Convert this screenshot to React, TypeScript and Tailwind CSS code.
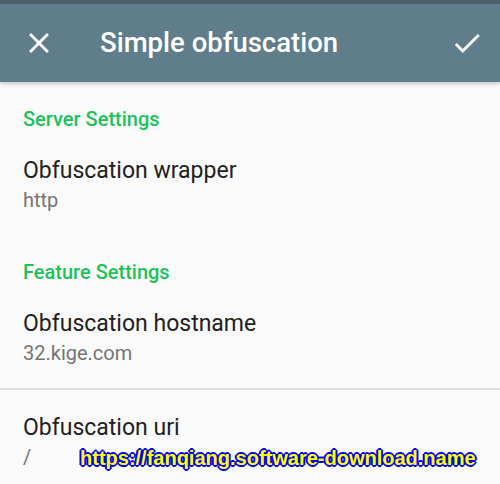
import React from "react";

const Row = ({ title, value, top = 16 }: { title: string; value: string; top?: number }) => (
  <div className={top === 16 ? "px-[23px] pt-[16px] pb-[21px]" : "px-[23px] pt-[22px] pb-[21px]"}>
    <div className="text-[23px] leading-[31px] text-[#212121]">{title}</div>
    <div className="text-[20px] leading-[28px] text-[#757575]">{value}</div>
  </div>
);

const Header = ({ children }: { children: React.ReactNode }) => (
  <div className="px-[23px] pt-[25px] pb-[8px] text-[20px] leading-[24px] font-medium text-[#1cc35a]">
    {children}
  </div>
);

const App = () => {
  return (
    <div className="w-[500px] h-[484px] overflow-hidden bg-[#fafafa] font-['Roboto',sans-serif] relative">
      <div className="h-[4px] bg-[#4b626d]" />
      <div className="h-[78px] bg-[#607d8b] flex items-center shadow-[0_2px_4px_rgba(0,0,0,0.2)] relative z-10">
        <svg width="34" height="34" viewBox="0 0 24 24" className="ml-[22px] shrink-0">
          <path d="M19 6.41L17.59 5 12 10.59 6.41 5 5 6.41 10.59 12 5 17.59 6.41 19 12 13.41 17.59 19 19 17.59 13.41 12z" fill="#fff" />
        </svg>
        <div className="ml-[44px] text-[27.5px] font-medium text-white">Simple obfuscation</div>
        <svg width="34" height="34" viewBox="0 0 24 24" className="ml-auto mr-[16px] shrink-0">
          <path d="M9 16.17L4.83 12l-1.42 1.41L9 19 21 7l-1.41-1.41z" fill="#fff" />
        </svg>
      </div>
      <Header>Server Settings</Header>
      <Row title="Obfuscation wrapper" value="http" />
      <Header>Feature Settings</Header>
      <Row title="Obfuscation hostname" value="32.kige.com" />
      <div className="h-[2px] bg-[#dedede]" />
      <Row title="Obfuscation uri" value="/" top={22} />
      <div className="absolute left-[80px] top-[443px] text-[20px] font-bold text-[#ffff00] font-['Liberation_Sans',sans-serif] [text-shadow:1px_1px_0_#0000ff,-1px_-1px_0_#0000ff,1px_-1px_0_#0000ff,-1px_1px_0_#0000ff,2px_0_0_#0000ff,-2px_0_0_#0000ff,0_2px_0_#0000ff,0_-2px_0_#0000ff]">
        https://fanqiang.software-download.name
      </div>
    </div>
  );
};

export default App;
